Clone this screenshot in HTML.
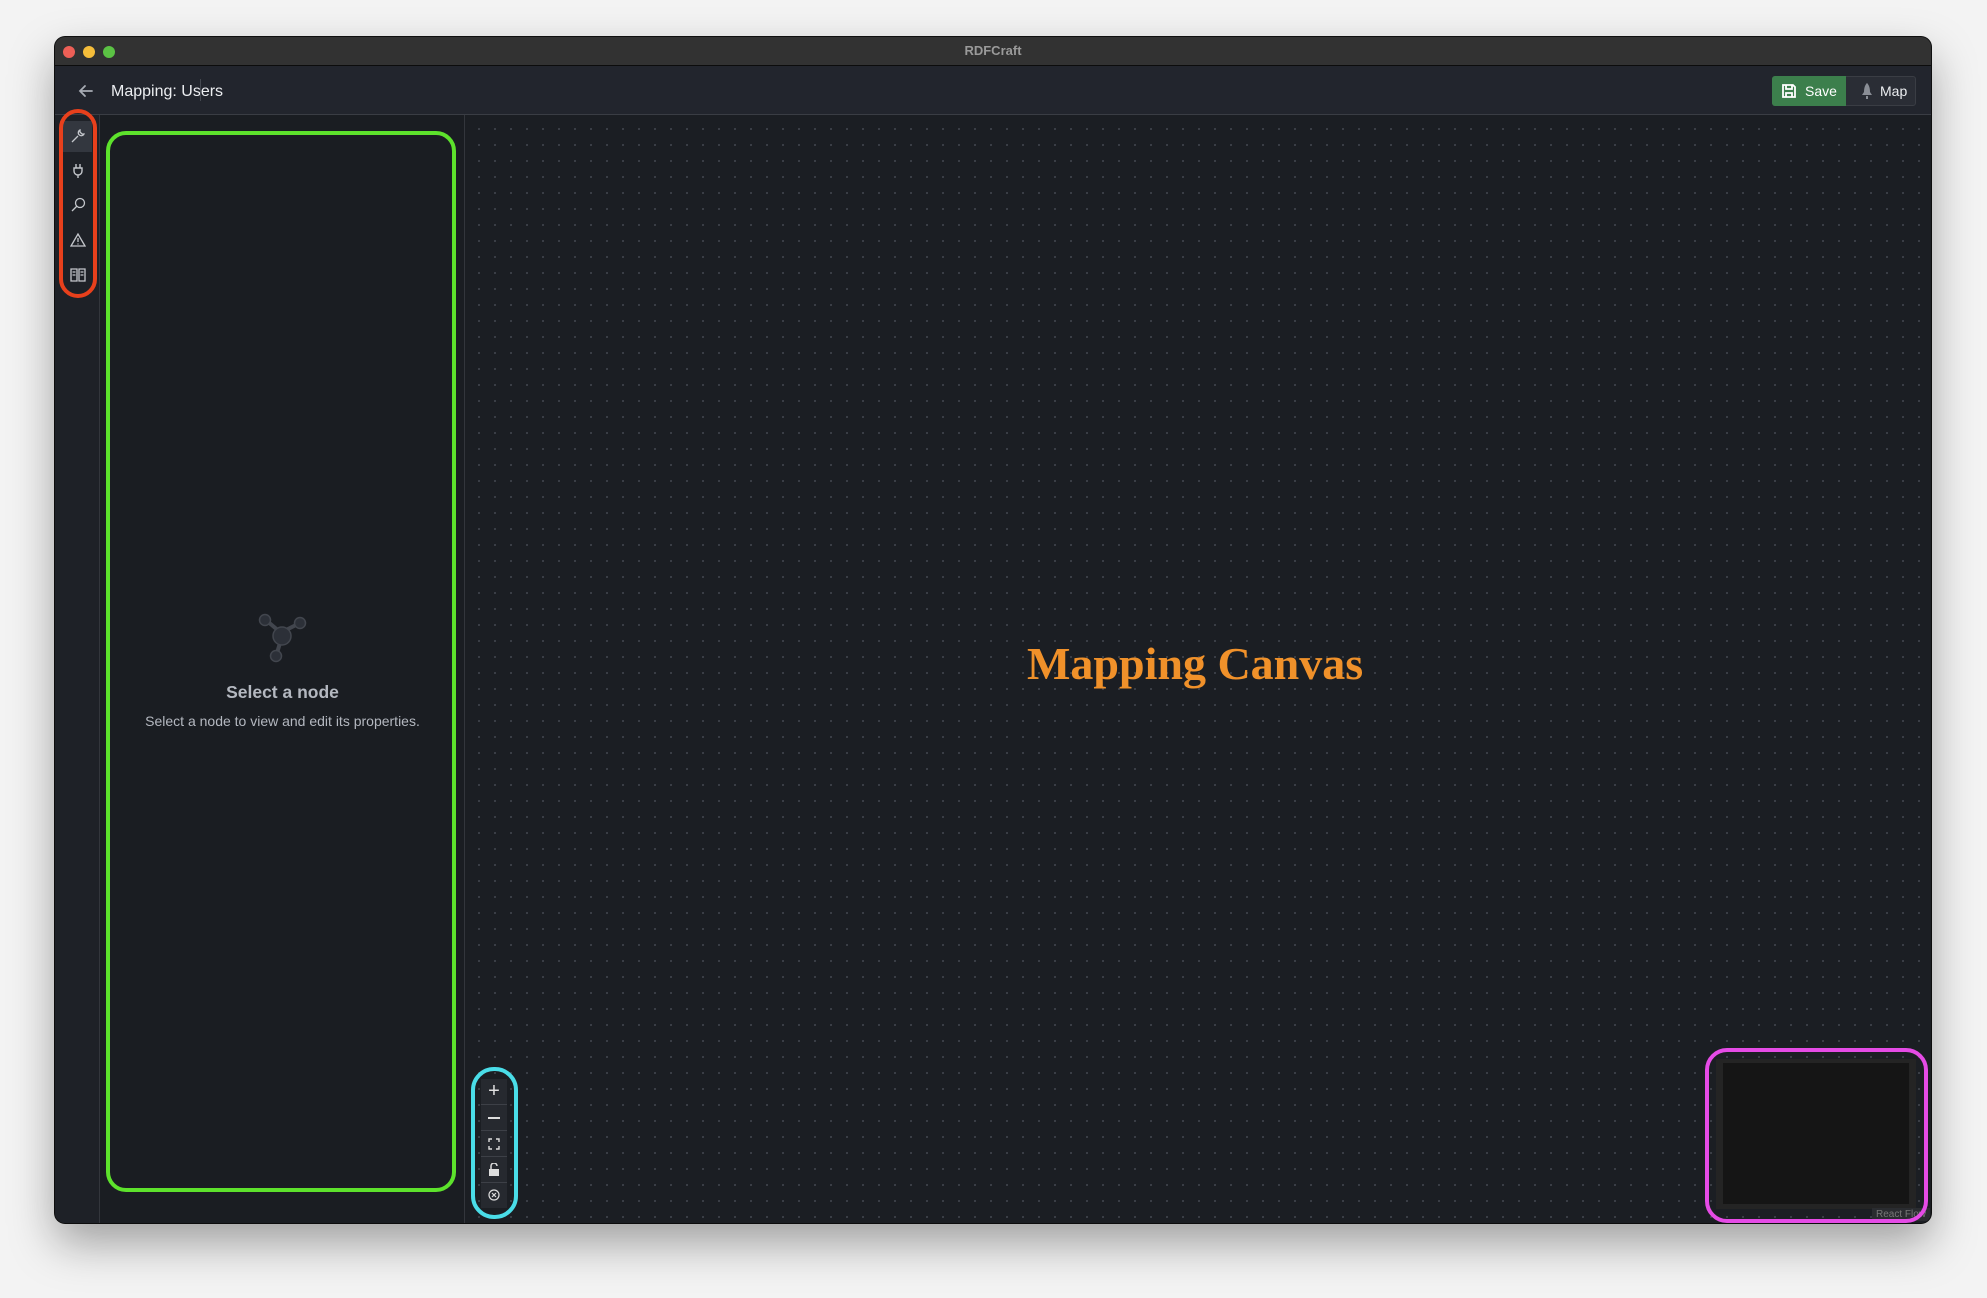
<!DOCTYPE html>
<html><head><meta charset="utf-8"><style>
*{box-sizing:border-box;margin:0;padding:0}
body{width:1987px;height:1298px;background:#f3f3f3;position:relative;overflow:hidden;font-family:"Liberation Sans",sans-serif}
.win{position:absolute;left:55px;top:37px;width:1876px;height:1186px;border-radius:10px;overflow:hidden;background:#1b1e23;box-shadow:0 20px 45px rgba(0,0,0,.35),0 0 0 1px #111}
.tb{position:absolute;left:0;top:0;right:0;height:29px;background:#323232;border-bottom:1px solid #0c0c0c}
.tb .t{position:absolute;left:0;right:0;top:6px;text-align:center;color:#9a9a9a;font-size:13px;font-weight:bold}
.dot{position:absolute;top:9px;width:12px;height:12px;border-radius:50%}
.hd{position:absolute;left:0;right:0;top:29px;height:49px;background:#22252d;border-bottom:1px solid #3a3d44}
.abs{position:absolute}
.side{position:absolute;left:0;top:78px;width:45px;bottom:0;background:#1e2127;border-right:1px solid #33363c}
.panel{position:absolute;left:45px;top:78px;width:365px;bottom:0;background:#1a1d22;border-right:1px solid #33363c}
.canvas{position:absolute;left:410px;top:78px;right:0;bottom:0;background-color:#1b1e23;background-image:radial-gradient(circle,#3c4048 1px,transparent 1.2px);background-size:16px 16px;background-position:6px 6px}
</style></head><body>
<div class="win">
 <div class="tb"><div class="dot" style="left:8px;background:#ed5f56"></div><div class="dot" style="left:28px;background:#f5bd3a"></div><div class="dot" style="left:48px;background:#5bc244"></div><div class="t">RDFCraft</div></div>
 <div class="hd">
  <svg class="abs" style="left:22px;top:16px" width="18" height="18" viewBox="0 0 18 18" fill="none" stroke="#a8acb4" stroke-width="1.8" stroke-linecap="round"><path d="M15 9H3M8 4L3 9l5 5"/></svg>
  <div class="abs" style="left:56px;top:17px;color:#eceef1;font-size:16px">Mapping: Users</div>
  <div class="abs" style="left:145px;top:13px;width:1px;height:22px;background:#444850"></div>
  <div class="abs" style="left:1717px;top:10px;width:144px;height:30px;border:1px solid #3a3d44;border-radius:3px;background:#2a2d35"></div>
  <div class="abs" style="left:1717px;top:10px;width:74px;height:30px;background:#3c7f4c;border-radius:3px 0 0 3px"></div>
  <svg class="abs" style="left:1726px;top:17px" width="16" height="16" viewBox="0 0 16 16" fill="none" stroke="#fff" stroke-width="1.8"><path d="M2 2h10l2 2v10H2z M5 2v4h6V2 M5 14v-4h6v4"/></svg>
  <div class="abs" style="left:1750px;top:17px;color:#fff;font-size:14px">Save</div>
  <svg class="abs" style="left:1805px;top:17px" width="14" height="16" viewBox="0 0 14 16" fill="#8a8e96"><path d="M7 0C9 2 10 5 10 9l2 3H2l2-3C4 5 5 2 7 0z M6 13h2v3H6z"/></svg>
  <div class="abs" style="left:1825px;top:17px;color:#eceef1;font-size:14px">Map</div>
 </div>
 <div class="side">
  <div class="abs" style="left:5px;top:6px;width:32px;height:31px;background:#33373f"></div>
  <svg class="abs" style="left:15px;top:13px" width="16" height="16" viewBox="0 0 16 16" fill="none" stroke="#c4c7cc" stroke-width="1.3"><path d="M2 14l6-6M10 2a3 3 0 104 4l-2 0-2-2z"/></svg>
  <svg class="abs" style="left:16px;top:48px" width="14" height="16" viewBox="0 0 14 16" fill="none" stroke="#c4c7cc" stroke-width="1.4"><path d="M5 1v4M9 1v4M3 5h8v3a4 4 0 01-8 0zM7 12v3"/></svg>
  <svg class="abs" style="left:15px;top:82px" width="16" height="16" viewBox="0 0 16 16" fill="none" stroke="#c4c7cc" stroke-width="1.3"><circle cx="10" cy="6" r="4.5"/><path d="M7 9l-5 5"/></svg>
  <svg class="abs" style="left:15px;top:117px" width="16" height="16" viewBox="0 0 16 16" fill="none" stroke="#c4c7cc" stroke-width="1.3"><path d="M8 2L1 14h14zM8 6v4M8 11.5v1"/></svg>
  <svg class="abs" style="left:15px;top:153px" width="16" height="14" viewBox="0 0 16 14" fill="none" stroke="#c4c7cc" stroke-width="1.3"><path d="M1 1h6v12H1zM9 1h6v12H9zM2.5 4h3M2.5 7h3M10.5 4h3M10.5 7h3"/></svg>
  <div class="abs" style="left:4px;top:-6px;width:38px;height:189px;border:4px solid #e8401c;border-radius:19px"></div>
 </div>
 <div class="panel">
  <div class="abs" style="left:6px;top:16px;width:350px;height:1061px;border:4px solid #5de22c;border-radius:20px"></div>
  <svg class="abs" style="left:155px;top:498px" width="56" height="50" viewBox="0 0 56 50" fill="#2c3038" stroke="#42464e" stroke-width="1.5"><path d="M12 8L25 19M43 11L29 18M22 40L25 30" stroke="#42464e" stroke-width="4"/><circle cx="10" cy="7" r="5.5"/><circle cx="45" cy="10" r="5.5"/><circle cx="21" cy="43" r="5.5"/><circle cx="27" cy="23" r="9"/></svg>
  <div class="abs" style="left:0;width:365px;top:567px;text-align:center;color:#b4b8c0;font-size:17.5px;font-weight:bold">Select a node</div>
  <div class="abs" style="left:0;width:365px;top:598px;text-align:center;color:#b4b8c0;font-size:14px">Select a node to view and edit its properties.</div>
 </div>
 <div class="canvas">
  <div class="abs" style="left:562px;top:522px;color:#f0912a;font-family:'Liberation Serif',serif;font-weight:bold;font-size:46px;white-space:nowrap">Mapping Canvas</div>
  <div class="abs" style="left:16px;top:964px;width:26px;height:129px;background:#26292f">
   <div style="height:26px;border-bottom:1px solid #3d4047;color:#e0e0e0;font-size:20px;text-align:center;line-height:24px">+</div>
   <div style="height:26px;border-bottom:1px solid #3d4047;position:relative"><div class="abs" style="left:7px;top:12px;width:12px;height:1.5px;background:#ddd"></div></div>
   <div style="height:26px;border-bottom:1px solid #3d4047;position:relative"><svg class="abs" style="left:7px;top:7px" width="12" height="12" viewBox="0 0 12 12" fill="none" stroke="#ddd" stroke-width="1.4"><path d="M1 4V1h3M8 1h3v3M11 8v3H8M4 11H1V8"/></svg></div>
   <div style="height:26px;border-bottom:1px solid #3d4047;position:relative"><svg class="abs" style="left:8px;top:6px" width="10" height="13" viewBox="0 0 10 13" fill="#ddd"><rect x="0" y="6" width="10" height="7"/><path d="M2 6V3a3 3 0 016 0" fill="none" stroke="#ddd" stroke-width="1.5"/></svg></div>
   <div style="height:25px;position:relative"><svg class="abs" style="left:7px;top:6px" width="12" height="12" viewBox="0 0 12 12" fill="none" stroke="#ddd" stroke-width="1.2"><circle cx="6" cy="6" r="5"/><path d="M4 4l4 4M8 4l-4 4"/></svg></div>
  </div>
  <div class="abs" style="left:6px;top:952px;width:47px;height:152px;border:4px solid #4adde8;border-radius:23px"></div>
  <div class="abs" style="left:1251px;top:944px;width:200px;height:150px;background:#242424"><div class="abs" style="left:7px;top:4px;width:186px;height:141px;background:#151515"></div></div>
  <div class="abs" style="left:1407px;top:1093px;padding:1px 4px;background:#2a2c30;color:#777;font-size:10px">React Flow</div>
  <div class="abs" style="left:1240px;top:933px;width:223px;height:175px;border:4px solid #e54be6;border-radius:22px"></div>
 </div>
</div>
</body></html>
